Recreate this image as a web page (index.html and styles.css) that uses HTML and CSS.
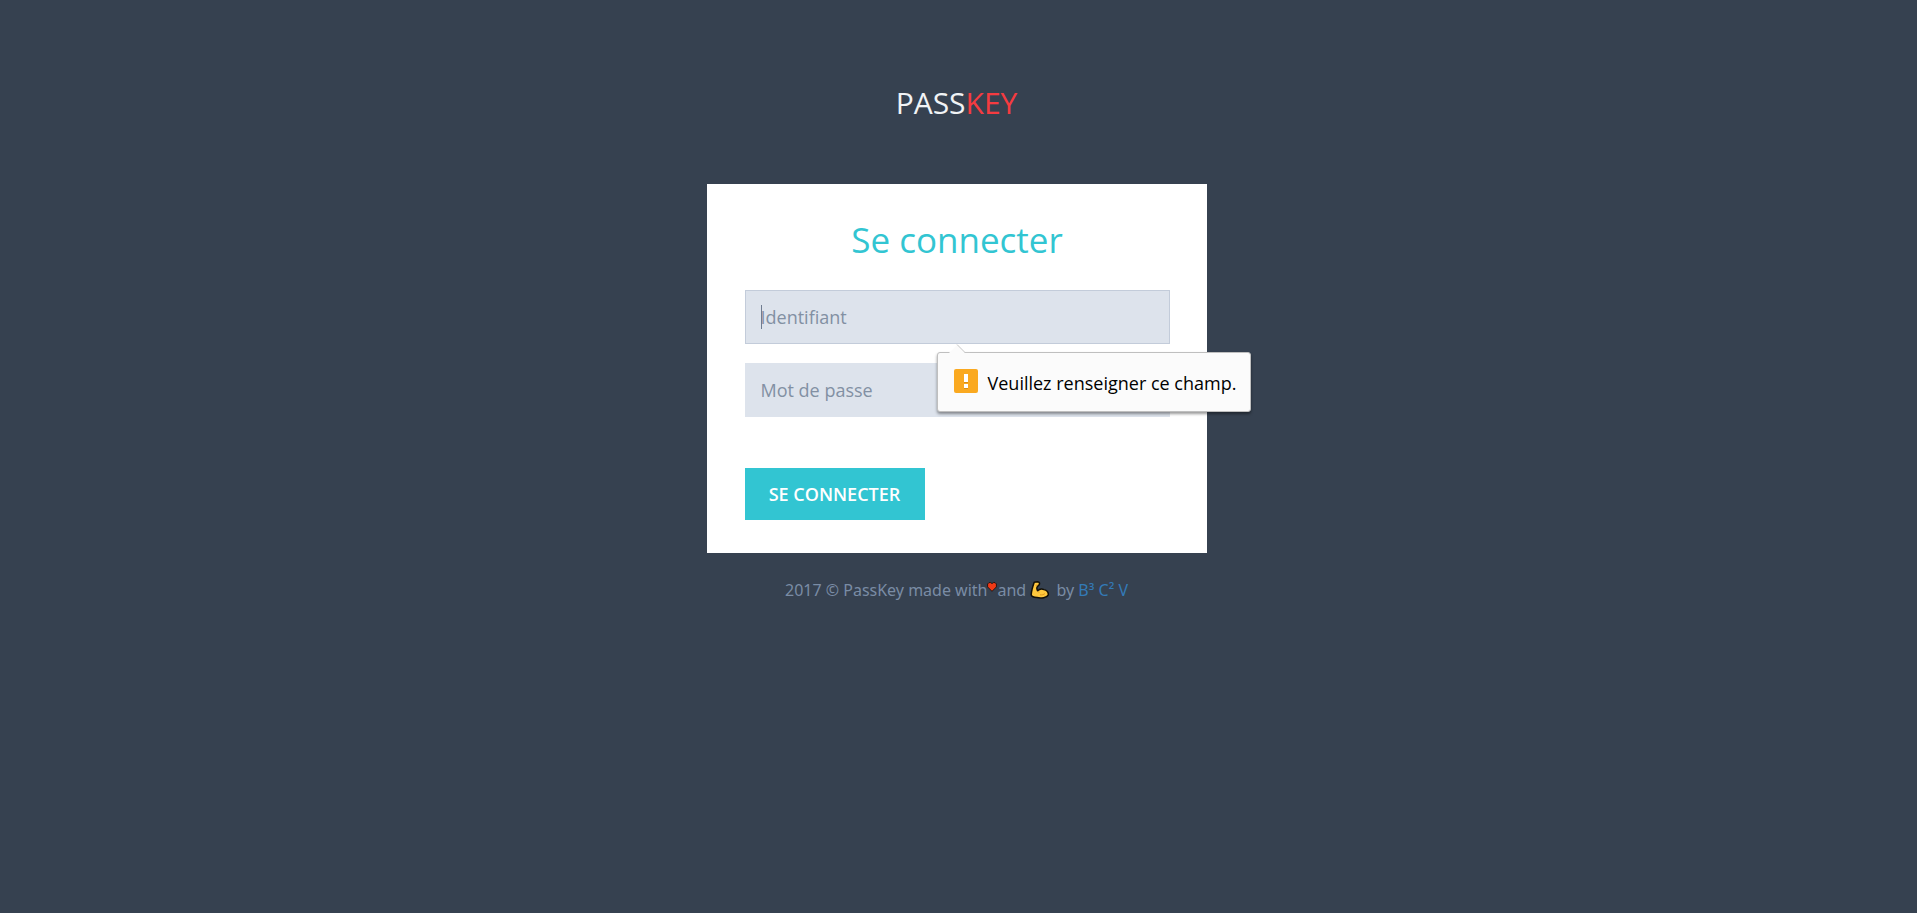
FILE: index.html
```html
<!DOCTYPE html>
<html lang="fr">
<head>
<meta charset="utf-8">
<title>PassKey - Se connecter</title>
<meta name="viewport" content="width=device-width, initial-scale=1">
<link rel="stylesheet" href="styles.css">
</head>
<body>
<header class="logo">PASS<span class="logo-accent">KEY</span></header>
<main class="card">
  <form class="login-form" novalidate>
    <h1 class="title">Se connecter</h1>
    <div class="field">
      <input class="input input-active" type="text" name="username" aria-label="Identifiant" placeholder="Identifiant">
      <span class="caret"></span>
      <div class="tooltip" role="alert">
        <svg class="tooltip-arrow" width="28" height="9" viewBox="0 0 28 9" aria-hidden="true">
          <path d="M5 9 L13 1 L21 9Z" fill="#fbfbfb"/>
          <path d="M13 .5 L21 8.5 H26" fill="none" stroke="#c4c4c4"/>
        </svg>
        <svg class="tooltip-icon" width="24" height="24" viewBox="0 0 24 24" aria-hidden="true">
          <rect width="24" height="24" rx="2" fill="#faa920"/>
          <rect x="10" y="13" width="4" height="1" fill="#d98e16"/>
          <rect x="10" y="19" width="4" height="1" fill="#d98e16"/>
          <rect x="10" y="5" width="4" height="8" fill="#fff"/>
          <rect x="10" y="15" width="4" height="4" fill="#fff"/>
        </svg>
        <span>Veuillez renseigner ce champ.</span>
      </div>
    </div>
    <div class="field">
      <input class="input" type="password" name="password" aria-label="Mot de passe" placeholder="Mot de passe">
    </div>
    <div class="actions">
      <button class="button" type="submit">Se connecter</button>
    </div>
  </form>
</main>
<footer class="footer">2017 © PassKey made with<svg class="heart" width="10" height="10" viewBox="0 0 10 10" role="img" aria-label="cœur"><path d="M5 9.3 L.6 4.9 V2 L2 .6 H3.8 L5 1.7 L6.2 .6 H8 L9.4 2 V4.9Z" fill="#f03a17" stroke="#120b0a" stroke-width=".8"/></svg>and <svg class="muscle" width="20" height="18" viewBox="0 0 20 18" role="img" aria-label="biceps"><path d="M4.2 1.2 L7.6 .8 C9.6 1 9.9 2.4 9.2 3.8 L7.5 5.4 C6.6 6.6 6.8 8.4 7.6 9.8 C9.2 8.2 11.6 7.6 14 8.6 C17 9.4 18.6 11.6 18.2 14 C17 16.8 11 17.4 7 16.6 C4 16.4 1.4 15.6 1.2 13.6 C1.4 10 2.6 5.8 4.2 1.2Z" fill="#ffc83d" stroke="#120f08" stroke-width="1.5" stroke-linejoin="round"/><path d="M5.6 4.4 L7.6 4 M7.8 10 L9 11.6 M10 13.8 C12 14.2 14 13.6 15 12.4" fill="none" stroke="#e09a20" stroke-width="1"/></svg> by <a class="footer-link" href="#">B³ C² V</a></footer>
</body>
</html>
```
FILE: styles.css
```css
* {
  box-sizing: border-box;
}

body {
  margin: 0;
  padding-right: 4px;
  background: #364150;
  font-family: "Open Sans", "Noto Sans", sans-serif;
}

.logo {
  padding: 80px 16px 58px;
  color: #f1f3f5;
  font-size: 30px;
  font-weight: 400;
  line-height: 46px;
  text-align: center;
}

.logo-accent {
  color: #f53b40;
}

.card {
  width: 100%;
  max-width: 500px;
  margin: 0 auto;
  padding: 32px 37px 33px 38px;
  background: #fff;
}

.title {
  margin: 0 0 26px;
  color: #32c5d2;
  font-size: 35px;
  font-weight: 400;
  line-height: 48px;
  text-align: center;
}

.field {
  position: relative;
  margin-bottom: 19px;
}

.input {
  display: block;
  width: 100%;
  height: 54px;
  padding: 8px 15px;
  border: 1px solid #dde3ec;
  border-radius: 0;
  outline: 0;
  background: #dde3ec;
  color: #8290a3;
  font-family: inherit;
  font-size: 18px;
}

.input-active {
  border-color: #c3ccda;
}

.input::placeholder {
  color: #8290a3;
  opacity: 1;
}

.caret {
  position: absolute;
  top: 15px;
  left: 16px;
  width: 1px;
  height: 24px;
  background: #6f7c90;
}

.tooltip {
  position: absolute;
  z-index: 1;
  top: 62px;
  left: 192px;
  display: flex;
  gap: 10px;
  height: 60px;
  padding: 16px 14px 16px 16px;
  border: 1px solid #bfbfbf;
  border-radius: 3px;
  background: #fbfbfb;
  box-shadow: 0 2px 3px rgba(0, 0, 0, 0.4);
  color: #000;
  font-size: 18px;
  line-height: 28px;
  white-space: nowrap;
}

.tooltip-arrow {
  position: absolute;
  top: -9px;
  left: 6px;
}

.tooltip-icon {
  flex: none;
}

.actions {
  padding-top: 32px;
}

.button {
  min-width: 180px;
  height: 52px;
  padding: 0 24px;
  border: 0;
  background: #32c5d2;
  color: #fff;
  font-family: inherit;
  font-size: 18px;
  font-weight: 600;
  text-transform: uppercase;
}

.footer {
  padding: 25px 16px;
  color: #7a8ca5;
  font-family: "Noto Sans", "Open Sans", sans-serif;
  font-size: 16px;
  line-height: 24px;
  text-align: center;
}

.heart {
  vertical-align: 4px;
}

.muscle {
  margin-right: 2px;
  vertical-align: -3px;
}

.footer-link {
  color: #337ab7;
  text-decoration: none;
}
```
